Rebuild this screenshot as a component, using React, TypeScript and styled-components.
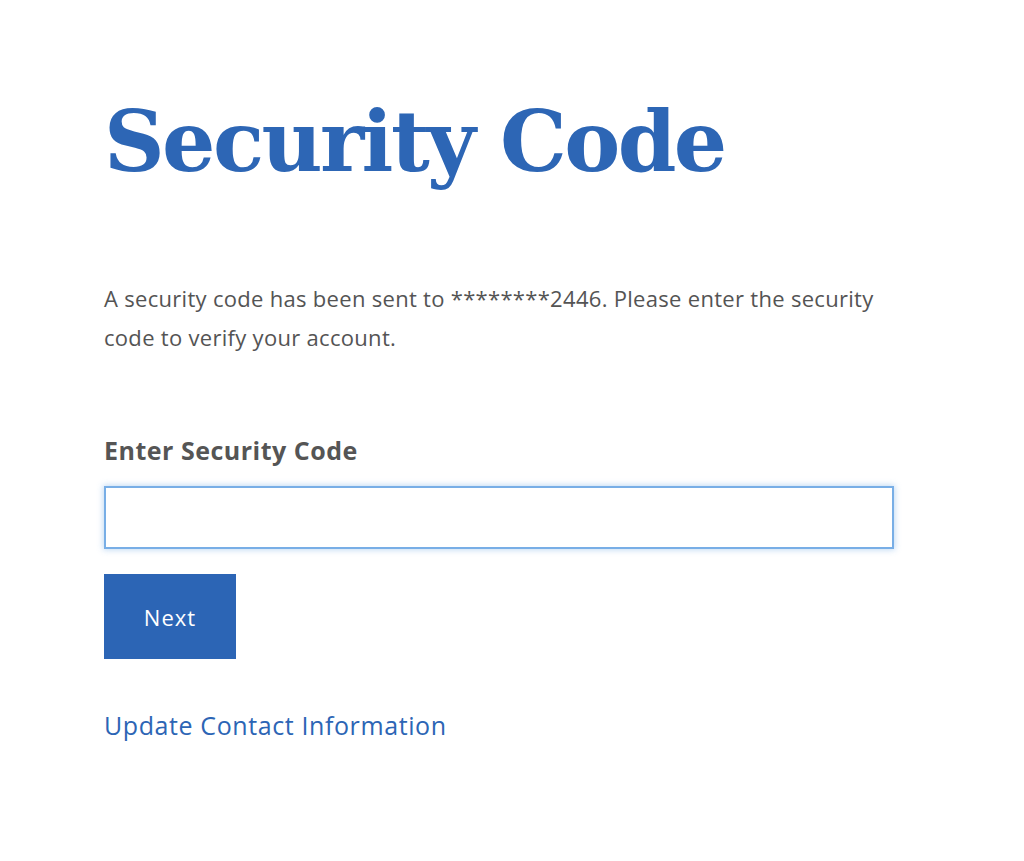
import styled, { createGlobalStyle } from "styled-components";

const GlobalStyle = createGlobalStyle`
  html, body {
    margin: 0;
    padding: 0;
    background: #fff;
  }
  body {
    font-family: "Open Sans", "Noto Sans", sans-serif;
    color: #555;
  }
`;

const Page = styled.main`
  padding: 92px 0 0 104px;
  width: 790px;
`;

const Title = styled.h1`
  margin: 0;
  font-family: "DejaVu Serif", "Liberation Serif", serif;
  font-weight: 700;
  font-size: 84px;
  line-height: 100px;
  letter-spacing: -2.6px;
  color: #2d66b5;
`;

const Intro = styled.p`
  margin: 87px 0 0;
  font-size: 22px;
  line-height: 39px;
  letter-spacing: 0.3px;
  color: #545454;
`;

const Form = styled.form`
  display: flex;
  flex-direction: column;
  align-items: flex-start;
  margin-top: 77px;
`;

const Label = styled.label`
  font-size: 25px;
  font-weight: 700;
  letter-spacing: 0.5px;
  color: #555;
  line-height: 32px;
`;

const CodeInput = styled.input`
  box-sizing: border-box;
  width: 790px;
  height: 63px;
  margin-top: 20px;
  border: 2px solid #78aee6;
  box-shadow: 0 0 6px 1px rgba(120, 174, 230, 0.45);
  outline: none;
  padding: 0 14px;
  font-size: 20px;
  font-family: inherit;
`;

const NextButton = styled.button`
  margin-top: 25px;
  width: 132px;
  height: 85px;
  border: none;
  background: #2c65b5;
  color: #fff;
  font-family: inherit;
  font-size: 22px;
  letter-spacing: 1px;
  cursor: pointer;
`;

const ContactLink = styled.a`
  margin-top: 49px;
  font-size: 25px;
  line-height: 34px;
  letter-spacing: 0.6px;
  color: #2c65b5;
  text-decoration: none;
`;

export default function App() {
  return (
    <>
      <GlobalStyle />
      <Page>
        <Title>Security Code</Title>
        <Intro>
          A security code has been sent to ********2446. Please enter the security
          code to verify your account.
        </Intro>
        <Form onSubmit={(e) => e.preventDefault()}>
          <Label htmlFor="code">Enter Security Code</Label>
          <CodeInput id="code" type="text" />
          <NextButton type="submit">Next</NextButton>
          <ContactLink href="#">Update Contact Information</ContactLink>
        </Form>
      </Page>
    </>
  );
}
